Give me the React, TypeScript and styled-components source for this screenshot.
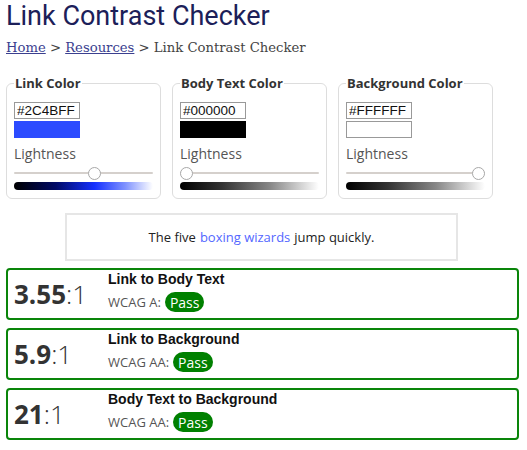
import React from "react";
import styled, {createGlobalStyle} from "styled-components";

const GlobalStyle = createGlobalStyle`
  html, body {
    margin: 0;
    padding: 0;
    background: #ffffff;
  }
  body {
    font-family: "Open Sans", "Liberation Sans", sans-serif;
    color: #333333;
  }
`;

type Picker = {
    label: string;
    hex: string;
    swatch: string;
    gradient: string;
    lightness: number;
};

const greyRamp = "linear-gradient(to right, #000000 0%, #333333 30%, #888888 65%, #ffffff 100%)";

const pickers: Picker[] = [
    {
        label: "Link Color",
        hex: "#2C4BFF",
        swatch: "#2C4BFF",
        gradient: "linear-gradient(to right, #000000 0%, #000a66 30%, #1530ff 58%, #7f92ff 80%, #ffffff 100%)",
        lightness: 59,
    },
    {
        label: "Body Text Color",
        hex: "#000000",
        swatch: "#000000",
        gradient: greyRamp,
        lightness: 0,
    },
    {
        label: "Background Color",
        hex: "#FFFFFF",
        swatch: "#FFFFFF",
        gradient: greyRamp,
        lightness: 100,
    },
];

type Result = {
    ratio: string;
    title: string;
    level: string;
};

const results: Result[] = [
    {ratio: "3.55", title: "Link to Body Text", level: "WCAG A:"},
    {ratio: "5.9", title: "Link to Background", level: "WCAG AA:"},
    {ratio: "21", title: "Body Text to Background", level: "WCAG AA:"},
];

const App: React.FC = () => {
    return (
        <Page>
            <GlobalStyle/>
            <Title>Link Contrast Checker</Title>
            <Breadcrumb>
                <Crumb href="#">Home</Crumb> &gt; <Crumb href="#">Resources</Crumb> &gt; Link Contrast Checker
            </Breadcrumb>

            <Pickers>
                {pickers.map(p => (
                    <PickerBox key={p.label}>
                        <Legend>{p.label}</Legend>
                        <HexInput defaultValue={p.hex}/>
                        <Swatch $color={p.swatch}/>
                        <SliderLabel>Lightness</SliderLabel>
                        <Slider type="range" min={0} max={100} defaultValue={p.lightness}/>
                        <GradientBar $gradient={p.gradient}/>
                    </PickerBox>
                ))}
            </Pickers>

            <Sample>
                The five <SampleLink href="#">boxing wizards</SampleLink> jump quickly.
            </Sample>

            <Results>
                {results.map(r => (
                    <ResultCard key={r.title}>
                        <Ratio><strong>{r.ratio}</strong>:1</Ratio>
                        <ResultBody>
                            <ResultTitle>{r.title}</ResultTitle>
                            <Verdict>
                                {r.level}
                                <PassBadge>Pass</PassBadge>
                            </Verdict>
                        </ResultBody>
                    </ResultCard>
                ))}
            </Results>
        </Page>
    );
}

export default App;

const Page = styled.div`
  padding: 0 8px 0 6px;
  width: 527px;
  box-sizing: border-box;
`;

const Title = styled.h1`
  margin: 0;
  font-family: Roboto, "Liberation Sans", sans-serif;
  font-weight: 400;
  font-size: 27px;
  line-height: 32px;
  color: #1c2059;
`;

const Breadcrumb = styled.div`
  margin-top: 6px;
  font-family: "DejaVu Serif", "Liberation Serif", serif;
  font-size: 13.2px;
  line-height: 20px;
  color: #444444;
`;

const Crumb = styled.a`
  color: #3b3f8f;
  text-decoration: underline;
`;

const Pickers = styled.div`
  display: flex;
  gap: 11px;
  margin-top: 16px;
`;

const PickerBox = styled.fieldset`
  width: 155px;
  box-sizing: border-box;
  margin: 0;
  padding: 0 7px 8px 7px;
  border: 1px solid #dddddd;
  border-radius: 6px;
  display: flex;
  flex-direction: column;
  align-items: flex-start;
`;

const Legend = styled.legend`
  padding: 0 1px;
  font-weight: 700;
  font-size: 13px;
  line-height: 18px;
  color: #333333;
`;

const HexInput = styled.input`
  margin: 10px 0 0 0;
  width: 66px;
  height: 17px;
  box-sizing: border-box;
  padding: 0 2px;
  border: 1px solid #999999;
  font-family: "Liberation Sans", Arial, sans-serif;
  font-size: 13.5px;
  color: #111111;
  outline: none;
`;

const Swatch = styled.div<{ $color: string }>`
  margin-top: 2px;
  width: 66px;
  height: 17px;
  box-sizing: border-box;
  background: ${p => p.$color};
  border: 1px solid ${p => p.$color === "#FFFFFF" ? "#999999" : p.$color};
`;

const SliderLabel = styled.div`
  margin-top: 6px;
  font-size: 14px;
  line-height: 20px;
  color: #555555;
`;

const Slider = styled.input`
  -webkit-appearance: none;
  appearance: none;
  margin: 2px 0 0 0;
  width: 100%;
  height: 14px;
  background: transparent;

  &::-webkit-slider-runnable-track {
    height: 2px;
    background: #d5d0cc;
    border-radius: 1px;
  }

  &::-webkit-slider-thumb {
    -webkit-appearance: none;
    width: 13px;
    height: 13px;
    margin-top: -5.5px;
    border-radius: 50%;
    background: #ffffff;
    border: 1px solid #a8a8a8;
    box-sizing: border-box;
  }
`;

const GradientBar = styled.div<{ $gradient: string }>`
  margin-top: 2px;
  width: 100%;
  height: 8px;
  border-radius: 4px;
  background: ${p => p.$gradient};
`;

const Sample = styled.div`
  margin: 14px 0 0 59px;
  width: 393px;
  height: 48px;
  box-sizing: border-box;
  border: 2px solid #e6e6e6;
  display: flex;
  align-items: center;
  justify-content: center;
  font-size: 13px;
  color: #222222;
`;

const SampleLink = styled.a`
  color: #5367ff;
  text-decoration: none;
  margin: 0 4px;
`;

const Results = styled.div`
  display: flex;
  flex-direction: column;
  gap: 8px;
  margin-top: 7px;
`;

const ResultCard = styled.div`
  display: grid;
  grid-template-columns: 94px 1fr;
  align-items: center;
  border: 2px solid #0a850a;
  border-radius: 4px;
  padding: 1px 6px 6px 6px;
`;

const Ratio = styled.div`
  font-size: 26px;
  font-weight: 300;
  color: #333333;
  line-height: 32px;
  padding-top: 5px;

  strong {
    font-weight: 700;
  }
`;

const ResultBody = styled.div`
  display: flex;
  flex-direction: column;
`;

const ResultTitle = styled.div`
  font-family: "Liberation Sans", Arial, sans-serif;
  font-weight: 700;
  font-size: 14px;
  line-height: 16px;
  color: #111111;
`;

const Verdict = styled.div`
  display: flex;
  align-items: center;
  gap: 4px;
  margin-top: 5px;
  font-size: 13px;
  color: #555555;
`;

const PassBadge = styled.span`
  display: inline-flex;
  align-items: center;
  height: 20px;
  padding: 0 5px;
  border-radius: 10px;
  background: #008000;
  color: #ffffff;
  font-size: 14px;
`;
